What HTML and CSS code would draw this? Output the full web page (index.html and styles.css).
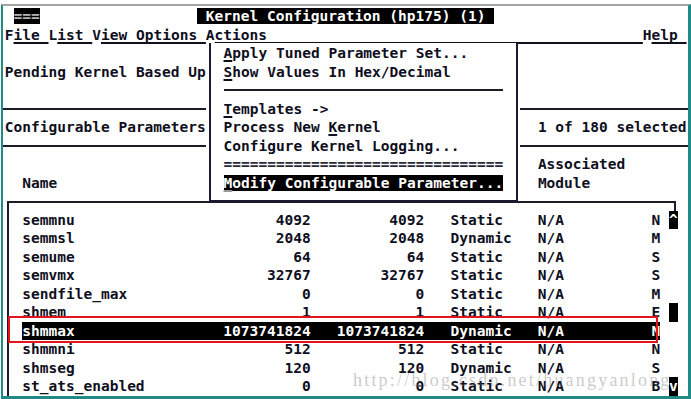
FILE: index.html
```html
<!DOCTYPE html>
<html>
<head>
<meta charset="utf-8">
<title>Kernel Configuration (hp175) (1)</title>
<link rel="stylesheet" href="styles.css">
</head>
<body>
<div class="frame">
<div class="row"> <span class="inv eq">===</span>                  <span class="inv"> Kernel Configuration (hp175) (1) </span></div>
<div class="row menu"><span>F</span><span class="u">ile </span><span>L</span><span class="u">ist </span><span>V</span><span class="u">iew Options </span><span>A</span><span class="u">ctions                                           </span><span>H</span><span class="u">elp </span></div>
<div class="row"></div>
<div class="row">Pending Kernel Based Up</div>
<div class="row"></div>
<div class="row"><span class="rule rule-l"></span><span class="rule rule-r"></span></div>
<div class="row split"><span>Configurable Parameters</span><span>1 of 180 selected</span></div>
<div class="row"><span class="rule rule-l"></span><span class="rule rule-r"></span></div>
<div class="row split"><span></span><span>Associated</span></div>
<div class="row split"><span>  Name</span><span>Module</span></div>

<div class="list">
  <div class="lrow"><div class="rec"><span>semmnu</span><span class="num">4092</span><span class="num">4092</span><span class="type">Static</span><span>N/A</span><span>N</span></div><span class="sb inv">^</span></div>
  <div class="lrow"><div class="rec"><span>semmsl</span><span class="num">2048</span><span class="num">2048</span><span class="type">Dynamic</span><span>N/A</span><span>M</span></div><span class="sb"></span></div>
  <div class="lrow"><div class="rec"><span>semume</span><span class="num">64</span><span class="num">64</span><span class="type">Static</span><span>N/A</span><span>S</span></div><span class="sb"></span></div>
  <div class="lrow"><div class="rec"><span>semvmx</span><span class="num">32767</span><span class="num">32767</span><span class="type">Static</span><span>N/A</span><span>S</span></div><span class="sb"></span></div>
  <div class="lrow"><div class="rec"><span>sendfile_max</span><span class="num">0</span><span class="num">0</span><span class="type">Static</span><span>N/A</span><span>M</span></div><span class="sb"></span></div>
  <div class="lrow"><div class="rec"><span>shmem</span><span class="num">1</span><span class="num">1</span><span class="type">Static</span><span>N/A</span><span>E</span></div><span class="sb inv"> </span></div>
  <div class="lrow sel"><div class="rec"><span>shmmax</span><span class="num">1073741824</span><span class="num">1073741824</span><span class="type">Dynamic</span><span>N/A</span><span>N</span></div><span class="sb"></span></div>
  <div class="lrow"><div class="rec"><span>shmmni</span><span class="num">512</span><span class="num">512</span><span class="type">Static</span><span>N/A</span><span>N</span></div><span class="sb"></span></div>
  <div class="lrow"><div class="rec"><span>shmseg</span><span class="num">120</span><span class="num">120</span><span class="type">Dynamic</span><span>N/A</span><span>S</span></div><span class="sb"></span></div>
  <div class="lrow"><div class="rec"><span>st_ats_enabled</span><span class="num">0</span><span class="num">0</span><span class="type">Static</span><span>N/A</span><span>B</span></div><span class="sb inv">v</span></div>
</div>

<div class="dropdown">
  <div class="mi"><u>A</u>pply Tuned Parameter Set...</div>
  <div class="mi"><u>S</u>how Values In Hex/Decimal</div>
  <div class="mi msep"></div>
  <div class="mi"><u>T</u>emplates -&gt;</div>
  <div class="mi">Process New <u>K</u>ernel</div>
  <div class="mi">Configure Kernel Logging...</div>
  <div class="mi meq">================================</div>
  <div class="mi"><span class="mhi"><u>M</u>odify Configurable Parameter...</span></div>
</div>

<div class="redbox"></div>
<div class="wm">http://blog.csdn.net/huangyanlong</div>
</div>
</body>
</html>
```
FILE: styles.css
```css
* { box-sizing: border-box; }
html, body { margin: 0; padding: 0; background: #fff; }
body { width: 691px; height: 399px; overflow: hidden; }

.frame {
  position: relative;
  margin: 4px 0 0 1px;
  width: 690px;
  height: 395px;
  border-top: 2px solid #a4a4a4;
  border-left: 2px solid #1f8b86;
  border-right: 3px solid #1f8b86;
  border-bottom: 3px solid #1f8b86;
  padding: 1px 0 0 1.8px;
  overflow: hidden;
  font: bold 14.53px/18.5px "DejaVu Sans Mono", monospace;
  color: #0f0f1e;
}

.row { height: 18.5px; white-space: pre; }
.inv { background: #000; color: #fff; }
.eq { color: #b4b4b4; }

.menu .u,
.mi u {
  text-decoration: underline;
  text-decoration-thickness: 1.5px;
  text-underline-offset: 2px;
  text-decoration-skip-ink: none;
}

.rule {
  display: inline-block;
  vertical-align: top;
  height: 18.5px;
  background: linear-gradient(#1c1c28, #1c1c28) 0 50% / 100% 2px no-repeat;
}
.rule-l { width: calc(23ch + 1.8px); margin-left: -1.8px; }
.rule-r { width: 21ch; margin-left: 36ch; }

.split { display: grid; grid-template-columns: 61ch 1fr; }

/* list box */
.list {
  margin-top: 9.25px;
  padding-top: 9.25px;
  background:
    linear-gradient(#1c1c28, #1c1c28) 2px 0 / 668px 2px no-repeat,
    linear-gradient(#1c1c28, #1c1c28) 2px 0 / 2px 100% no-repeat,
    linear-gradient(#1c1c28, #1c1c28) 669px 0 / 2px 10px no-repeat;
}
.lrow {
  display: grid;
  grid-template-columns: 73ch 1ch;
  column-gap: 1ch;
  padding-left: 2ch;
  height: 18.5px;
  white-space: pre;
}
.rec {
  display: grid;
  grid-template-columns: 23ch 10ch 13ch 13ch 13ch 1ch;
}
.rec .num { text-align: right; }
.rec .type { padding-left: 3ch; }
.sel .rec { background: #000; color: #fff; }
.sb { text-align: center; }

/* Actions pull-down menu */
.dropdown {
  position: absolute;
  left: 206.4px;
  top: 37px;
  width: 308.3px;
  height: 159.25px;
  padding: 1px 0 0 12.15px;
  background: #fff;
  border-left: 2px solid #1c1830;
  border-right: 2px solid #1c1830;
  border-bottom: 2px solid #1c1830;
}
.mi { height: 18.5px; white-space: pre; }
.msep {
  width: 32ch;
  background: linear-gradient(#1c1c28, #1c1c28) 0 50% / 100% 2px no-repeat;
}
.meq { color: #2a2a3a; }
.mhi { background: #000; color: #fff; }
.mhi u { text-decoration-color: #9a9a9a; }

.redbox {
  position: absolute;
  left: 5px;
  top: 310px;
  width: 650px;
  height: 27px;
  border: 2px solid #e3141c;
}

.wm {
  position: absolute;
  left: 350px;
  top: 365px;
  font: 18px/18px "Liberation Serif", serif;
  letter-spacing: 2.2px;
  color: rgba(120, 120, 120, 0.4);
  white-space: nowrap;
}
```
